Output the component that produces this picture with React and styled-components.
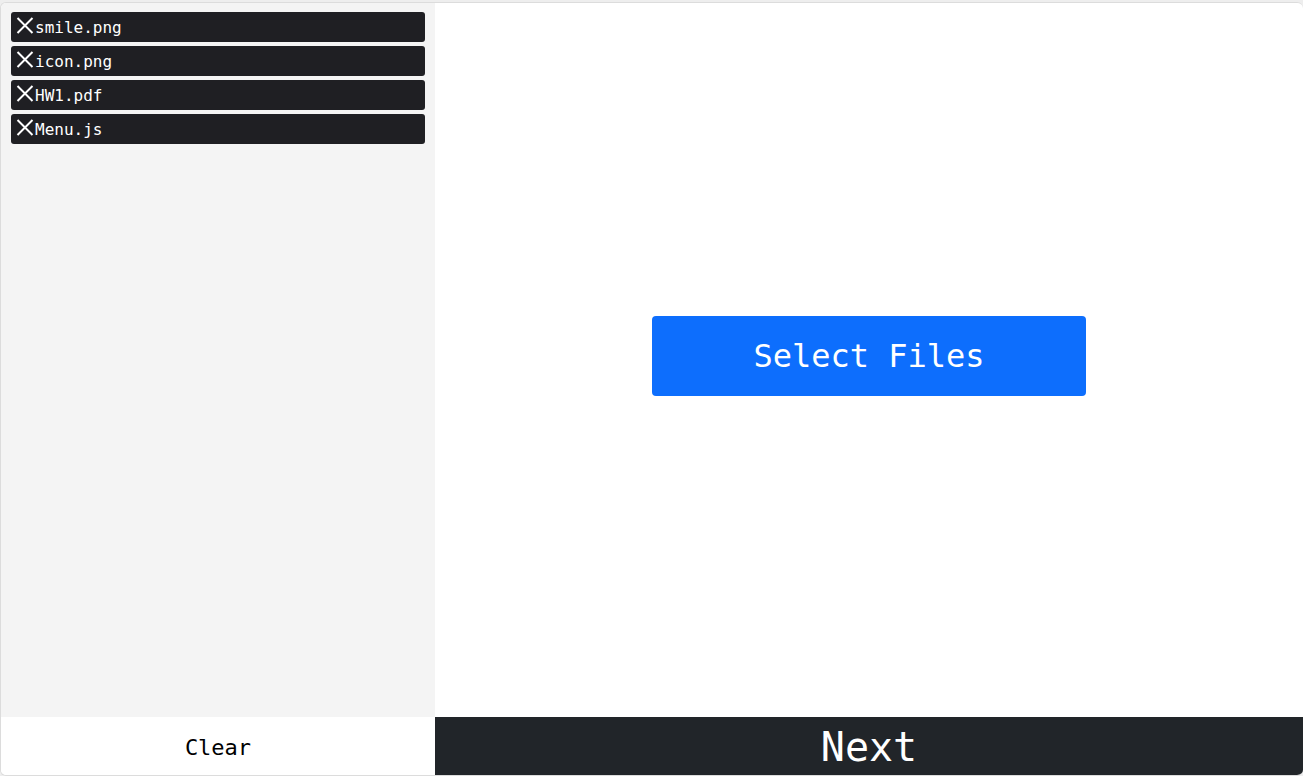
import React from "react";
import styled, { createGlobalStyle } from "styled-components";

const Global = createGlobalStyle`
  html, body { margin: 0; padding: 0; background: #eeeeee; }
  body { font-family: "DejaVu Sans Mono", "Liberation Mono", monospace; }
  * { box-sizing: border-box; }
`;

const Card = styled.div`
  margin-top: 2px;
  width: 1303px;
  height: 774px;
  display: grid;
  grid-template-columns: 434px 1fr;
  grid-template-rows: 1fr 58px;
  border: 1px solid #dcdcdc;
  border-right: none;
  border-radius: 6px;
  overflow: hidden;
  background: #fff;
`;

const Sidebar = styled.div`
  background: #f4f4f4;
  padding: 9px 10px;
  display: flex;
  flex-direction: column;
  gap: 4px;
`;

const FileItem = styled.div`
  height: 30px;
  background: #1f1f23;
  border-radius: 3px;
  display: flex;
  align-items: center;
  padding-left: 3px;
  color: #fff;
  font-size: 16px;
`;

const Remove = styled.button`
  border: none;
  background: none;
  padding: 0;
  width: 21px;
  height: 20px;
  display: flex;
  align-items: center;
  justify-content: center;
  cursor: pointer;
  margin-top: -4px;
`;

const Main = styled.div`
  display: flex;
  align-items: center;
  justify-content: center;
  padding-bottom: 8px;
`;

const SelectButton = styled.button`
  width: 434px;
  height: 80px;
  background: #0d6efd;
  color: #fff;
  border: none;
  border-radius: 4px;
  font-family: inherit;
  font-size: 32px;
  cursor: pointer;
`;

const FooterButton = styled.button`
  border: none;
  font-family: inherit;
  cursor: pointer;
  display: flex;
  align-items: center;
  justify-content: center;
  background: ${(p) => (p.$dark ? "#212529" : "#fff")};
  color: ${(p) => (p.$dark ? "#fff" : "#000")};
  font-size: ${(p) => (p.$dark ? "40px" : "22px")};
  padding: 2px 0 0;
`;

const XIcon = () => (
  <svg width="18" height="17" viewBox="0 0 18 17">
    <path d="M1.5 1 L16.5 16 M16.5 1 L1.5 16" stroke="#fff" strokeWidth="2" fill="none" />
  </svg>
);

const files = ["smile.png", "icon.png", "HW1.pdf", "Menu.js"];

export default function App() {
  return (
    <>
      <Global />
      <Card>
        <Sidebar>
          {files.map((f) => (
            <FileItem key={f}>
              <Remove aria-label="remove">
                <XIcon />
              </Remove>
              <span>{f}</span>
            </FileItem>
          ))}
        </Sidebar>
        <Main>
          <SelectButton>Select Files</SelectButton>
        </Main>
        <FooterButton>Clear</FooterButton>
        <FooterButton $dark>Next</FooterButton>
      </Card>
    </>
  );
}
